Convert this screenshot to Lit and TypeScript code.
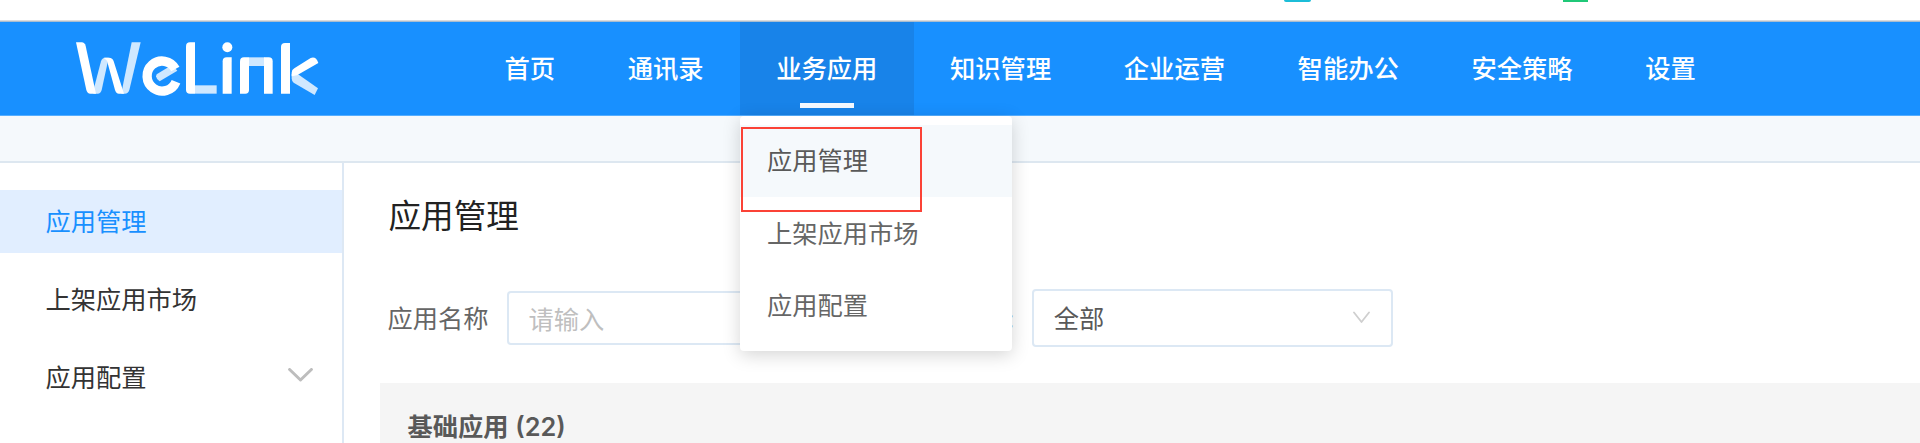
import { LitElement, html, css } from "lit";
import { customElement, property } from "lit/decorators.js";
import { classMap } from "lit/directives/class-map.js";

@customElement("brand-logo")
class BrandLogo extends LitElement {
  static styles = css`
    :host { display: block; width: 270px; height: 80px; }
    svg { display: block; }
    .solid { fill: #fff; }
    .tint { fill: #cfe8ff; }
    .ring { fill: none; stroke: #fff; stroke-width: 28; }
  `;
  render() {
    return html`<svg width="270" height="80" viewBox="0 0 810 240" role="img" aria-label="WeLink">
      <path class="tint" d="M215 37H242L208 180Q205 191 194 191H184L190 160Z" />
      <path class="tint" d="M100 191H113Q122 191 125 180L146 83H136Q126 83 123 94L103 170Z" />
      <path class="solid" d="M48 37H65Q74 37 77 48L108 191H91Q82 191 79 180Z" />
      <path class="solid" d="M131 83H147Q158 83 161 94L192 191H177Q168 191 165 180L141 92Z" />
      <path class="tint" d="M290 133L337 104L352 122L299 154Q290 150 288 139Z" />
      <path class="ring" d="M346 117A45 45 0 1 0 348 155" />
      <path class="solid" d="M378 49Q378 37 390 37H405V191H390Q378 191 378 180Z" />
      <rect class="tint" x="405" y="166" width="65" height="25" />
      <circle class="solid" cx="502" cy="52" r="15" />
      <path class="solid" d="M488 94Q488 82 500 82H515V191H488Z" />
      <rect class="tint" x="567" y="82" width="46" height="26" />
      <path class="solid" d="M540 94Q540 82 552 82H567V180Q567 191 556 191H540Z" />
      <path class="solid" d="M612 82H626Q638 82 638 94V191H612Z" />
      <path class="solid" d="M663 51Q663 39 675 39H690V191H663Z" />
      <path class="tint" d="M695 132L712 131L774 175L764 195L701 158Q695 153 695 145Z" />
      <path class="solid" d="M695 139V128Q695 119 703 115L752 84Q768 78 775 99L711 136Z" />
    </svg>`;
  }
}

@customElement("top-nav")
class TopNav extends LitElement {
  @property({ type: Array }) items: string[] = [];
  @property() active = "";
  static styles = css`
    :host { display: flex; height: 100%; }
    .item {
      box-sizing: border-box; height: 100%; padding: 0 36.3px; position: relative;
      display: flex; align-items: center; color: #fff;
      font-size: 25.3px; font-weight: 500; line-height: 38px; white-space: nowrap;
    }
    .label { padding-bottom: 3px; }
    .active { background: #1883e9; }
    .active::after {
      content: ""; position: absolute; left: 60px; bottom: 7px; width: 54px; height: 5.5px; background: #f4f9ff;
    }
  `;
  render() {
    return this.items.map(
      (t) => html`<div class=${classMap({ item: true, active: t === this.active })}><span class="label">${t}</span></div>`
    );
  }
}

@customElement("app-root")
class AppRoot extends LitElement {
  static styles = css`
    :host {
      display: flex; flex-direction: column; position: relative;
      width: 100%; height: 443px; overflow: hidden; background: #fff;
      font-family: "Noto Sans CJK SC", sans-serif; font-size: 25.25px; line-height: 38px; color: #333;
    }
    .browser {
      box-sizing: border-box; height: 22px; flex: none; display: flex;
      padding-left: 1284px; gap: 253px; border-bottom: 1px solid #a9bdd0; box-shadow: inset 0 -1px #dcdcdc;
    }
    .tab { width: 27px; height: 2px; background: #1cbdd8; border-radius: 0 0 3px 3px; }
    .tab.green { width: 25px; background: #20c878; border-radius: 0; margin-left: -1px; }
    .header {
      box-sizing: border-box; height: 94px; flex: none; display: flex;
      background: #1890ff; border-bottom: 1px solid #55aeff;
    }
    .logo { width: 408.2px; padding: 8px 0 0 60px; }
    .crumb { box-sizing: border-box; height: 47px; flex: none; background: #f5f9fc; border-bottom: 2px solid #dde7f0; }
    .body { flex: 1; display: flex; min-height: 0; }
    .side {
      box-sizing: border-box; width: 344px; flex: none; border-right: 2px solid #dde8f4;
      padding-top: 27px; display: flex; flex-direction: column; gap: 15px;
    }
    .menu { height: 63px; padding: 0 29px 0 45.5px; display: flex; align-items: center; justify-content: space-between; }
    .menu span { padding-bottom: 2.5px; }
    .menu.on { background: #e1eeff; color: #1890ff; }
    .main { flex: 1; min-width: 0; display: flex; flex-direction: column; padding-left: 36px; }
    .title { padding: 27px 0 0 8.5px; font-size: 32.6px; line-height: 48px; color: #222; }
    .filters { height: 58px; margin-top: 51px; padding-left: 7.5px; display: flex; align-items: center; color: #666; }
    .filters span { padding-bottom: 2px; }
    .input, .select { box-sizing: border-box; border: 2px solid #dce8f4; border-radius: 4px; display: flex; align-items: center; }
    .input { width: 361px; height: 54px; margin-left: 18px; padding: 0 0 0 20px; color: #bfbfbf; }
    .kind { width: 146.5px; text-align: right; }
    .select { width: 361px; height: 58px; margin-left: 17.8px; padding: 0 21px 0 20px; justify-content: space-between; color: #595959; }
    .panel { flex: 1; margin-top: 36px; padding: 23px 0 0 27.5px; background: #f5f5f5; color: #595959; font-weight: 700; }
    .count { font-family: Inter, sans-serif; font-size: 25.3px; font-weight: 600; margin-left: 1px; }
    svg { display: block; fill: none; stroke-linecap: round; stroke-linejoin: round; }
    .drop {
      position: absolute; left: 740px; top: 116px; width: 271.6px; height: 235px; box-sizing: border-box;
      padding-top: 9px; background: #fff; border-radius: 4px; box-shadow: 0 4px 18px rgba(0, 0, 0, 0.17); color: #666;
    }
    .option { box-sizing: border-box; height: 72.3px; padding: 0 0 3.5px 27px; display: flex; align-items: center; }
    .option.on { background: #f5f9fc; color: #595959; }
    .mark { position: absolute; left: 741px; top: 127px; width: 181px; height: 85px; box-sizing: border-box; border: 2px solid #fb4236; }
  `;
  nav = ["首页", "通讯录", "业务应用", "知识管理", "企业运营", "智能办公", "安全策略", "设置"];
  apps = ["应用管理", "上架应用市场", "应用配置"];
  render() {
    return html`
      <div class="browser"><div class="tab"></div><div class="tab green"></div></div>
      <div class="header">
        <div class="logo"><brand-logo></brand-logo></div>
        <top-nav .items=${this.nav} active="业务应用"></top-nav>
      </div>
      <div class="crumb"></div>
      <div class="body">
        <div class="side">
          ${this.apps.map(
            (t, i) => html`<div class=${classMap({ menu: true, on: i === 0 })}>
              <span>${t}</span>
              ${i === 2
                ? html`<svg width="25" height="20" viewBox="0 0 25 20" stroke="#bdbdbd" stroke-width="3"><path d="M1.6 1.5L12.5 12L23.4 1.5" /></svg>`
                : ""}
            </div>`
          )}
        </div>
        <div class="main">
          <div class="title">应用管理</div>
          <div class="filters">
            <span>应用名称</span>
            <div class="input">请输入</div>
            <span class="kind">应用类型:</span>
            <div class="select">
              <span>全部</span>
              <svg width="17" height="16" viewBox="0 0 17 16" stroke="#cfcfcf" stroke-width="1.8"><path d="M1 2.5L8.5 12L16 2.5" /></svg>
            </div>
          </div>
          <div class="panel">基础应用 <span class="count">(22)</span></div>
        </div>
      </div>
      <div class="drop">
        ${this.apps.map((t, i) => html`<div class=${classMap({ option: true, on: i === 0 })}>${t}</div>`)}
      </div>
      <div class="mark"></div>
    `;
  }
}
